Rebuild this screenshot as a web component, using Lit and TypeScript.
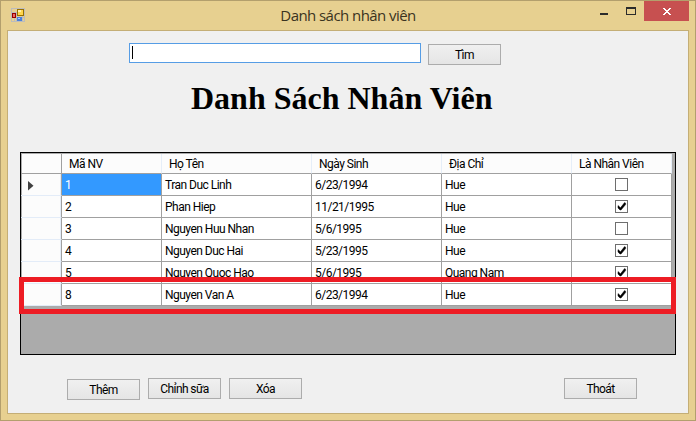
import { LitElement, html, css, svg } from "lit";
import { customElement, property } from "lit/decorators.js";
import { classMap } from "lit/directives/class-map.js";

interface Employee {
  id: string;
  name: string;
  birth: string;
  address: string;
  staff: boolean;
}

const EMPLOYEES: Employee[] = [
  { id: "1", name: "Tran Duc Linh", birth: "6/23/1994", address: "Hue", staff: false },
  { id: "2", name: "Phan Hiep", birth: "11/21/1995", address: "Hue", staff: true },
  { id: "3", name: "Nguyen Huu Nhan", birth: "5/6/1995", address: "Hue", staff: false },
  { id: "4", name: "Nguyen Duc Hai", birth: "5/23/1995", address: "Hue", staff: true },
  { id: "5", name: "Nguyen Quoc Hao", birth: "5/6/1995", address: "Quang Nam", staff: true },
  { id: "8", name: "Nguyen Van A", birth: "6/23/1994", address: "Hue", staff: true },
];

@customElement("check-box")
class CheckBox extends LitElement {
  @property({ type: Boolean }) checked = false;

  static styles = css`
    :host { display: block; width: 13px; height: 13px; }
    svg { display: block; }
  `;

  render() {
    return html`<svg width="13" height="13" viewBox="0 0 13 13">
      <rect x=".5" y=".5" width="12" height="12" fill="#fff" stroke="#6e6e6e" />
      ${this.checked
        ? svg`<path d="M3 5.6L5.5 7.8L9.6 2.6L10.6 3.2V4.6L6 10H5L3 8Z" fill="#000" stroke="#000" stroke-width=".5" />`
        : ""}
    </svg>`;
  }
}

@customElement("data-grid")
class DataGrid extends LitElement {
  static styles = css`
    :host {
      display: block;
      box-sizing: border-box;
      width: 656px;
      height: 203px;
      border: 1px solid #000;
      background: #ababab;
      padding-top: 1px;
      position: relative;
      font-size: 12px;
      letter-spacing: -0.52px;
    }
    .row {
      display: grid;
      grid-template-columns: 41px 100px 150px 130px 130px 100px;
      width: 651px;
      height: 22px;
    }
    .head { height: 20px; }
    .cell {
      box-sizing: border-box;
      border-right: 1px solid #a0a0a0;
      border-bottom: 1px solid #a0a0a0;
      background: #fff;
      padding-left: 3px;
      line-height: 22px;
      white-space: nowrap;
      overflow: hidden;
    }
    .head .cell {
      background: #fcfcfc;
      border-right-color: #e6eef8;
      padding-left: 7px;
      line-height: 20px;
    }
    .head .cell:first-child { border-right-color: #a0a0a0; box-shadow: inset 1px 0 #ababab; }
    .mark {
      background: #fcfcfc;
      border-bottom-color: #e3ecf8;
      box-shadow: inset 1px 0 #ababab, inset -1px 0 #e3ecf8;
      padding: 7px 0 0 7px;
    }
    .mark svg { display: block; }
    .selected { background: #3399ff; color: #fff; }
    .check { padding: 4px 0 0 43px; }
    .highlight {
      position: absolute;
      left: -2px;
      top: 124px;
      width: 657px;
      height: 37px;
      box-sizing: border-box;
      border: 5px solid #ed1c24;
    }
  `;

  render() {
    return html`
      <div class="row head">
        <div class="cell"></div>
        ${["Mã NV", "Họ Tên", "Ngày Sinh", "Địa Chỉ", "Là Nhân Viên"].map(
          (t) => html`<div class="cell">${t}</div>`
        )}
      </div>
      ${EMPLOYEES.map(
        (e, i) => html`<div class="row">
          <div class="cell mark">
            ${i === 0
              ? html`<svg width="6" height="10" viewBox="0 0 6 10"><path d="M0 0L5.5 4.8L0 9.5Z" fill="#404040" /></svg>`
              : ""}
          </div>
          <div class=${classMap({ cell: true, selected: i === 0 })}>${e.id}</div>
          <div class="cell">${e.name}</div>
          <div class="cell">${e.birth}</div>
          <div class="cell">${e.address}</div>
          <div class="cell check"><check-box ?checked=${e.staff}></check-box></div>
        </div>`
      )}
      <div class="highlight"></div>
    `;
  }
}

@customElement("app-root")
class AppRoot extends LitElement {
  static styles = css`
    :host {
      display: flex;
      flex-direction: column;
      box-sizing: border-box;
      width: 696px;
      height: 421px;
      border: 1px solid #b39f6d;
      background: #e7d090;
      padding: 0 6px 6px;
      font-family: Roboto, "Liberation Sans", sans-serif;
      font-size: 12px;
      color: #000;
    }
    .title {
      display: grid;
      grid-template-columns: 140px 1fr 140px;
      height: 29px;
      flex: none;
    }
    .logo { padding: 7px 0 0 4px; }
    .logo svg, .controls svg { display: block; }
    .caption {
      text-align: center;
      font: 15px/29px "Open Sans", "Noto Sans", sans-serif;
      letter-spacing: -0.56px;
      color: #3a3320;
    }
    .controls { display: flex; justify-content: flex-end; }
    .client {
      flex: 1;
      box-sizing: border-box;
      border: 1px solid #c4ae76;
      background: #f0f0f0;
      padding: 12px 12px 0;
    }
    .search { display: flex; gap: 7px; padding-left: 109px; height: 22px; }
    .field {
      box-sizing: border-box;
      width: 292px;
      height: 20px;
      border: 1px solid #569de5;
      background: #fff;
      padding: 2px;
    }
    .caret { width: 1px; height: 13px; background: #000; }
    .button {
      box-sizing: border-box;
      width: 73px;
      height: 21px;
      border: 1px solid #acacac;
      background: linear-gradient(#f0f0f0, #e5e5e5);
      text-align: center;
      line-height: 20px;
      letter-spacing: -0.6px;
    }
    .find { margin-top: 1px; }
    h1 {
      margin: 15px 0 0 171px;
      height: 72px;
      font: bold 32px/37px "Liberation Serif", serif;
      white-space: nowrap;
    }
    .actions { display: flex; gap: 8px; padding: 23px 39px 0 47px; }
    .add { margin-top: 1px; }
    .exit { margin-left: auto; }
  `;

  render() {
    return html`
      <div class="title">
        <div class="logo">
          <svg width="14" height="14" viewBox="0 1 14 14" shape-rendering="crispEdges">
            <path d="M.5 1.5H13.5V14.5H.5ZM.5 5.5H5.5V14M.5 10.5H13.5M3.5 10V14M11.5 9V14" fill="none" stroke="#bcbcbc" />
            <rect x="6" y="2" width="7" height="7" fill="#987000" />
            <rect x="7" y="3" width="5" height="5" fill="#ffd64c" />
            <rect x="7" y="3" width="3" height="2" fill="#fff0b0" />
            <rect x="1" y="6" width="4" height="5" fill="#980000" />
            <rect x="2" y="7" width="2" height="3" fill="#ed6a62" />
            <rect x="6" y="10" width="5" height="4" fill="#4a80dc" />
            <rect x="7" y="11" width="2" height="1" fill="#a8c8ff" />
          </svg>
        </div>
        <div class="caption">Danh sách nhân viên</div>
        <div class="controls">
          <svg width="89" height="20" viewBox="0 0 89 20" shape-rendering="crispEdges">
            <path d="M0 12H8V14H0Z" fill="#2b2b2b" />
            <path d="M26 6H36V14H26ZM27 8V13H35V8Z" fill="#2b2b2b" fill-rule="evenodd" />
            <rect x="44" width="45" height="20" fill="#c75050" />
            <path d="M63 7H65V8H66V9H68V8H69V7H71V8H70V9H69V10H68V11H69V12H70V13H71V14H69V13H68V12H66V13H65V14H63V13H64V12H65V11H66V10H65V9H64V8H63Z" fill="#fff" />
          </svg>
        </div>
      </div>
      <div class="client">
        <div class="search">
          <div class="field"><div class="caret"></div></div>
          <div class="button find">Tìm</div>
        </div>
        <h1>Danh Sách Nhân Viên</h1>
        <data-grid></data-grid>
        <div class="actions">
          <div class="button add">Thêm</div>
          <div class="button">Chỉnh sữa</div>
          <div class="button">Xóa</div>
          <div class="button exit">Thoát</div>
        </div>
      </div>
    `;
  }
}
